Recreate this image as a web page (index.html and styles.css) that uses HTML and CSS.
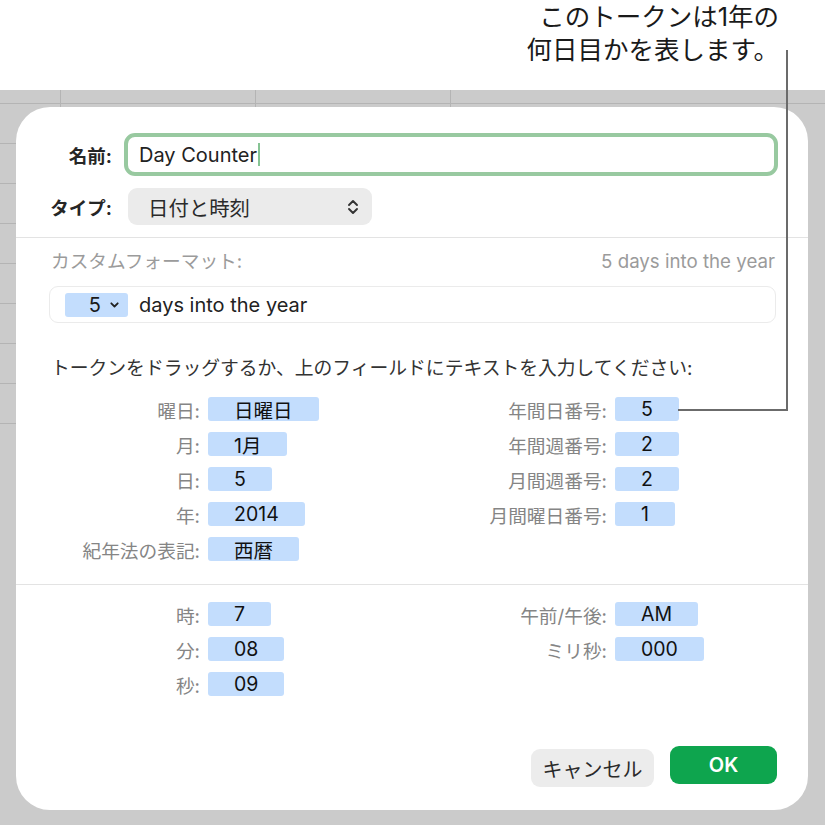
FILE: index.html
```html
<!DOCTYPE html>
<html lang="ja">
<head>
<meta charset="utf-8">
<title>Day Counter</title>
<link rel="stylesheet" href="styles.css">
</head>
<body>
<div class="page">
  <div class="callout">このトークンは1年の<br>何日目かを表します。</div>
  <div class="sheet">
    <div class="dialog">
      <div class="row row-name">
        <span class="flabel">名前:</span>
        <div class="name-input"><span class="name-text">Day Counter</span><span class="caret"></span></div>
      </div>
      <div class="row row-type">
        <span class="flabel">タイプ:</span>
        <div class="popup">
          <span>日付と時刻</span>
          <svg class="updown" width="12" height="18" viewBox="0 0 12 18"><path d="M2 7 L6 3 L10 7 M2 11 L6 15 L10 11" fill="none" stroke="#333" stroke-width="1.9" stroke-linecap="round" stroke-linejoin="round"/></svg>
        </div>
      </div>
      <div class="sep sep-top"></div>
      <div class="custom">
        <div class="custom-head"><span>カスタムフォーマット:</span><span>5 days into the year</span></div>
        <div class="format-field">
          <span class="ftoken">5<svg width="9" height="6" viewBox="0 0 9 6"><path d="M1.3 1.3 L4.5 4.5 L7.7 1.3" fill="none" stroke="#222" stroke-width="1.8" stroke-linecap="round" stroke-linejoin="round"/></svg></span>
          <span class="ftext">days into the year</span>
        </div>
        <p class="hint">トークンをドラッグするか、上のフィールドにテキストを入力してください:</p>
      </div>
      <div class="tokens tokens-date">
        <div class="tcol tcol-left">
          <span class="tlabel">曜日:</span><span class="token">日曜日</span>
          <span class="tlabel">月:</span><span class="token">1月</span>
          <span class="tlabel">日:</span><span class="token">5</span>
          <span class="tlabel">年:</span><span class="token">2014</span>
          <span class="tlabel">紀年法の表記:</span><span class="token">西暦</span>
        </div>
        <div class="tcol tcol-right">
          <span class="tlabel">年間日番号:</span><span class="token">5</span>
          <span class="tlabel">年間週番号:</span><span class="token">2</span>
          <span class="tlabel">月間週番号:</span><span class="token">2</span>
          <span class="tlabel">月間曜日番号:</span><span class="token">1</span>
        </div>
      </div>
      <div class="sep sep-mid"></div>
      <div class="tokens tokens-time">
        <div class="tcol tcol-left">
          <span class="tlabel">時:</span><span class="token">7</span>
          <span class="tlabel">分:</span><span class="token">08</span>
          <span class="tlabel">秒:</span><span class="token">09</span>
        </div>
        <div class="tcol tcol-right">
          <span class="tlabel">午前/午後:</span><span class="token">AM</span>
          <span class="tlabel">ミリ秒:</span><span class="token">000</span>
        </div>
      </div>
      <div class="buttons">
        <button class="btn btn-cancel">キャンセル</button>
        <button class="btn btn-ok">OK</button>
      </div>
    </div>
  </div>
  <svg class="leader" width="825" height="827" viewBox="0 0 825 827"><path d="M787 50 V410 H678" fill="none" stroke="#6b6b6b" stroke-width="2"/></svg>
</div>
</body>
</html>
```
FILE: styles.css
```css
* { box-sizing: border-box; }
html, body { margin: 0; padding: 0; background: #fff; }
body {
  width: 825px;
  height: 827px;
  overflow: hidden;
  font-family: "Inter", "Noto Sans CJK JP", sans-serif;
  color: #1d1d1d;
}
.page { position: relative; width: 825px; height: 827px; }

.callout {
  height: 90px;
  padding-right: 46px;
  text-align: right;
  font-size: 25.5px;
  line-height: 33px;
  color: #1a1a1a;
}

.sheet {
  height: 735px;
  background-color: #cbcbcb;
  background-image:
    linear-gradient(#b4b4b4, #b4b4b4),
    linear-gradient(#b4b4b4, #b4b4b4),
    linear-gradient(#b4b4b4, #b4b4b4),
    linear-gradient(#b4b4b4, #b4b4b4),
    repeating-linear-gradient(to bottom, transparent 0 39px, #b4b4b4 39px 40px);
  background-repeat: no-repeat;
  background-size: 100% 1px, 1px 17px, 1px 17px, 1px 17px, 16px 320px;
  background-position: 0 13px, 60px 0, 255px 0, 450px 0, 0 14px;
  padding: 17px 17px 15px 16px;
}

.dialog {
  width: 792px;
  height: 703px;
  background: #fff;
  border-radius: 34px;
  display: flex;
  flex-direction: column;
}

.row { display: flex; align-items: center; }
.flabel {
  width: 96px;
  text-align: right;
  font-weight: 700;
  font-size: 18.5px;
  color: #262626;
}
.row-name { margin-top: 26px; height: 43px; }
.name-input {
  margin-left: 12px;
  width: 654px;
  height: 43px;
  border: 4px solid #98c9a0;
  border-radius: 11px;
  display: flex;
  align-items: center;
  padding-left: 11px;
  font-size: 20px;
  color: #222;
}
.caret {
  display: inline-block;
  width: 2px;
  height: 23px;
  margin-left: 1px;
  background: #86c494;
}

.row-type { margin-top: 12px; height: 37px; }
.popup {
  margin-left: 16px;
  width: 244px;
  height: 37px;
  background: #ebebeb;
  border-radius: 9px;
  display: flex;
  align-items: center;
  justify-content: space-between;
  padding: 0 13px 0 20px;
  font-size: 20.4px;
  color: #2a2a2a;
}

.sep { height: 1px; background: #e3e3e3; }
.sep-top { margin-top: 12px; }

.custom { padding: 0 32px 0 33px; }
.custom-head {
  margin-top: 12px;
  padding: 0 1px 0 2px;
  display: flex;
  justify-content: space-between;
  font-size: 18.7px;
  line-height: 24px;
  color: #9b9b9b;
}
.format-field {
  margin-top: 12px;
  height: 37px;
  border: 1px solid #ebebeb;
  border-radius: 9px;
  display: flex;
  align-items: center;
  padding-left: 15px;
  font-size: 20px;
  color: #222;
}
.ftoken {
  width: 63px;
  height: 24px;
  background: #c3ddfd;
  border-radius: 3px;
  display: flex;
  align-items: center;
  justify-content: flex-end;
  padding-right: 9px;
  gap: 9px;
  font-size: 20px;
  color: #1a1a1a;
}
.ftext { margin-left: 11px; }
.hint {
  margin: 34px 0 0 2px;
  font-size: 18.8px;
  line-height: 24px;
  color: #333;
  white-space: nowrap;
}

.tokens { display: flex; }
.tokens-date { margin-top: 16px; }
.tcol {
  display: grid;
  column-gap: 8px;
  row-gap: 11px;
  align-items: center;
  justify-items: start;
  grid-auto-rows: 24px;
}
.tcol-left { width: 408px; grid-template-columns: 184px auto; }
.tcol-right { grid-template-columns: 183px auto; }
.tlabel {
  justify-self: end;
  font-size: 18.7px;
  color: #858585;
  white-space: nowrap;
}
.token {
  height: 24px;
  padding: 0 26px;
  background: #c3ddfd;
  border-radius: 3px;
  display: flex;
  align-items: center;
  justify-content: center;
  font-size: 19.5px;
  color: #111;
}

.sep-mid { margin-top: 23px; }
.tokens-time { margin-top: 17px; }

.buttons {
  margin-top: auto;
  margin-bottom: 23px;
  padding-right: 31px;
  display: flex;
  justify-content: flex-end;
  align-items: flex-start;
  gap: 16px;
}
.btn {
  border: none;
  border-radius: 9px;
  font-family: inherit;
  font-size: 20px;
  padding: 0;
}
.btn-cancel {
  margin-top: 3px;
  width: 123px;
  height: 38px;
  background: #ececec;
  color: #2a2a2a;
}
.btn-ok {
  width: 107px;
  height: 38px;
  background: #0ea54e;
  color: #fff;
  font-weight: 600;
}

.leader { position: absolute; left: 0; top: 0; pointer-events: none; }
```
